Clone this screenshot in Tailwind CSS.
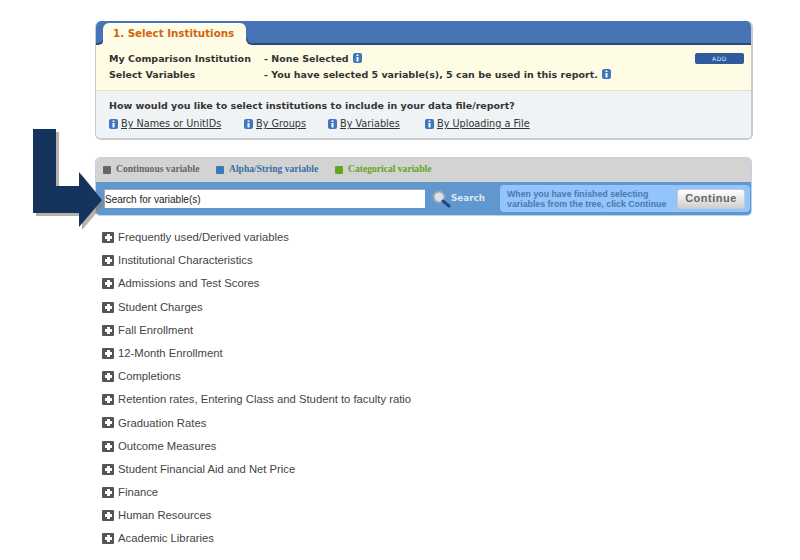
<!DOCTYPE html>
<html lang="en">
<head>
  <meta charset="UTF-8">
  <title>Select Institutions</title>
  <script src="https://cdn.jsdelivr.net/npm/@tailwindcss/browser@4"></script>
</head>
<body class="bg-white font-['DejaVu_Sans',sans-serif]">
<div class="relative h-[560px] w-[800px] overflow-hidden pl-[95px] pt-[21px]">

  <!-- Step 1 panel -->
  <section class="w-[658px] h-[119px] rounded-[6px] border-b-2 border-r-2 border-l border-[#c9cbcc] overflow-hidden flex flex-col">
    <div class="h-[24px] bg-[#4674b5] border-b-2 border-[#2b4a75] relative shrink-0">
      <div class="absolute left-[1px] bottom-[-2px] w-[7px] h-[7px] bg-[#fffde8]"><div class="w-[7px] h-[7px] bg-[#4674b5] rounded-br-[6px] border-b-2 border-r border-[#2b4a75]"></div></div>
      <div class="absolute left-[7px] top-[2px] h-[22px] w-[143px] bg-[#fffde8] rounded-t-[6px] pl-[10px] pt-[3px] text-[10.3px] font-bold text-[#d0660a] leading-[14px]">1. Select Institutions</div>
      <div class="absolute left-[150px] bottom-[-2px] w-[7px] h-[7px] bg-[#fffde8]"><div class="w-[7px] h-[7px] bg-[#4674b5] rounded-bl-[6px] border-b-2 border-l border-[#2b4a75]"></div></div>
    </div>
    <div class="h-[46px] bg-[#fffce6] border-b border-dotted border-[#cfcdb8] pl-[13px] pt-[6px] text-[9.5px] font-bold text-[#333] shrink-0 relative">
      <div class="flex h-[16px] items-center">
        <span class="w-[155px]">My Comparison Institution</span>
        <span>- None Selected</span>
        <svg class="ml-[4px] mb-[2px]" width="9" height="10" viewBox="0 0 9 10"><rect width="9" height="10" rx="2" fill="#3f76bd"/><path d="M3.5 1.5h2v1.6h-2zM3.5 4h2v4.5h-2z" fill="#fff"/></svg>
      </div>
      <div class="flex h-[16px] items-center">
        <span class="w-[155px]">Select Variables</span>
        <span>- You have selected 5 variable(s), 5 can be used in this report.</span>
        <svg class="ml-[4px] mb-[2px]" width="9" height="10" viewBox="0 0 9 10"><rect width="9" height="10" rx="2" fill="#3f76bd"/><path d="M3.5 1.5h2v1.6h-2zM3.5 4h2v4.5h-2z" fill="#fff"/></svg>
      </div>
      <button class="absolute right-[7px] top-[8px] w-[49px] h-[11px] bg-[#2f5a9b] rounded-[2px] text-[#dfe8f3] text-[6px] font-normal leading-[11px] tracking-[0.5px] text-center">ADD</button>
    </div>
    <div class="flex-1 bg-[#eff3f5] pl-[13px] pt-[7px] text-[#333]">
      <p class="text-[9.5px] font-bold leading-[16px]">How would you like to select institutions to include in your data file/report?</p>
      <div class="flex mt-[2px] text-[9.7px] leading-[16px]">
        <a class="flex items-center w-[135px]"><svg class="mr-[3px]" width="9" height="10" viewBox="0 0 9 10"><rect width="9" height="10" rx="2" fill="#3f76bd"/><path d="M3.5 1.5h2v1.6h-2zM3.5 4h2v4.5h-2z" fill="#fff"/></svg><span class="underline">By Names or UnitIDs</span></a>
        <a class="flex items-center w-[84px]"><svg class="mr-[3px]" width="9" height="10" viewBox="0 0 9 10"><rect width="9" height="10" rx="2" fill="#3f76bd"/><path d="M3.5 1.5h2v1.6h-2zM3.5 4h2v4.5h-2z" fill="#fff"/></svg><span class="underline">By Groups</span></a>
        <a class="flex items-center w-[97px]"><svg class="mr-[3px]" width="9" height="10" viewBox="0 0 9 10"><rect width="9" height="10" rx="2" fill="#3f76bd"/><path d="M3.5 1.5h2v1.6h-2zM3.5 4h2v4.5h-2z" fill="#fff"/></svg><span class="underline">By Variables</span></a>
        <a class="flex items-center"><svg class="mr-[3px]" width="9" height="10" viewBox="0 0 9 10"><rect width="9" height="10" rx="2" fill="#3f76bd"/><path d="M3.5 1.5h2v1.6h-2zM3.5 4h2v4.5h-2z" fill="#fff"/></svg><span class="underline">By Uploading a File</span></a>
      </div>
    </div>
  </section>

  <!-- Search panel -->
  <section class="mt-[17px] w-[657px] h-[59px] rounded-[5px] border border-[#bcd3ea] overflow-hidden flex flex-col">
    <div class="h-[24px] bg-[#d3d3d3] flex items-center pl-[7px] pb-[2px] font-['Liberation_Serif',serif] font-bold text-[9.6px] shrink-0">
      <span class="w-[8px] h-[8px] bg-[#666] rounded-[1px] mr-[5px] shrink-0 mt-[2px]"></span><span class="text-[#666] w-[100px]">Continuous variable</span>
      <span class="w-[8px] h-[8px] bg-[#3c78bd] rounded-[1px] mr-[5px] shrink-0 mt-[2px]"></span><span class="text-[#3a6ea8] w-[106px]">Alpha/String variable</span>
      <span class="w-[8px] h-[8px] bg-[#62a61f] rounded-[1px] mr-[5px] shrink-0 mt-[2px]"></span><span class="text-[#62a61f]">Categorical variable</span>
    </div>
    <div class="flex-1 bg-[#6197cf] flex items-center pl-[8px]">
      <input class="w-[321px] shrink-0 h-[19px] bg-white border-t border-l border-[#a9a9a9] text-[10px] text-[#222] font-['Liberation_Sans',sans-serif] placeholder:text-[#222]" placeholder="Search for variable(s)">
      <svg class="ml-[6px] shrink-0" width="20" height="20" viewBox="0 0 20 20">
        <circle cx="8" cy="8" r="5.5" fill="#d7e2ec" stroke="#9aa5ad" stroke-width="2"/>
        <path d="M12 12l6 5" stroke="#1d4a80" stroke-width="3" stroke-linecap="round"/>
      </svg>
      <span class="w-[37px] shrink-0 text-[8.8px] font-bold text-[#dbe8f5]">Search</span>
      <div class="ml-[12px] w-[250px] shrink-0 h-[27px] bg-[#93c4fb] rounded-[4px] flex items-center pl-[7px] pr-[5px] justify-between">
        <p class="font-['Liberation_Sans',sans-serif] text-[8.8px] leading-[10px] font-bold text-[#4a78ad] whitespace-nowrap">When you have finished selecting<br>variables from the tree, click Continue</p>
        <button class="w-[68px] h-[20px] shrink-0 rounded-[3px] bg-gradient-to-b from-white to-[#cfcfcf] border border-[#c4ccd6] font-['Liberation_Sans',sans-serif] text-[11px] tracking-[0.5px] font-bold text-[#666]">Continue</button>
      </div>
    </div>
  </section>

  <!-- Variable tree -->
  <ul class="mt-[9.9px] pl-[7px] font-['Liberation_Sans',sans-serif] text-[11.27px] text-[#444]">
    <li class="h-[23.2px] flex items-center"><span class="w-[12px] h-[11px] mr-[4px] bg-[#555] rounded-[1px] bg-[linear-gradient(white,white),linear-gradient(white,white)] bg-[length:7px_3px,3px_7px] bg-center bg-no-repeat"></span>Frequently used/Derived variables</li>
    <li class="h-[23.2px] flex items-center"><span class="w-[12px] h-[11px] mr-[4px] bg-[#555] rounded-[1px] bg-[linear-gradient(white,white),linear-gradient(white,white)] bg-[length:7px_3px,3px_7px] bg-center bg-no-repeat"></span>Institutional Characteristics</li>
    <li class="h-[23.2px] flex items-center"><span class="w-[12px] h-[11px] mr-[4px] bg-[#555] rounded-[1px] bg-[linear-gradient(white,white),linear-gradient(white,white)] bg-[length:7px_3px,3px_7px] bg-center bg-no-repeat"></span>Admissions and Test Scores</li>
    <li class="h-[23.2px] flex items-center"><span class="w-[12px] h-[11px] mr-[4px] bg-[#555] rounded-[1px] bg-[linear-gradient(white,white),linear-gradient(white,white)] bg-[length:7px_3px,3px_7px] bg-center bg-no-repeat"></span>Student Charges</li>
    <li class="h-[23.2px] flex items-center"><span class="w-[12px] h-[11px] mr-[4px] bg-[#555] rounded-[1px] bg-[linear-gradient(white,white),linear-gradient(white,white)] bg-[length:7px_3px,3px_7px] bg-center bg-no-repeat"></span>Fall Enrollment</li>
    <li class="h-[23.2px] flex items-center"><span class="w-[12px] h-[11px] mr-[4px] bg-[#555] rounded-[1px] bg-[linear-gradient(white,white),linear-gradient(white,white)] bg-[length:7px_3px,3px_7px] bg-center bg-no-repeat"></span>12-Month Enrollment</li>
    <li class="h-[23.2px] flex items-center"><span class="w-[12px] h-[11px] mr-[4px] bg-[#555] rounded-[1px] bg-[linear-gradient(white,white),linear-gradient(white,white)] bg-[length:7px_3px,3px_7px] bg-center bg-no-repeat"></span>Completions</li>
    <li class="h-[23.2px] flex items-center"><span class="w-[12px] h-[11px] mr-[4px] bg-[#555] rounded-[1px] bg-[linear-gradient(white,white),linear-gradient(white,white)] bg-[length:7px_3px,3px_7px] bg-center bg-no-repeat"></span>Retention rates, Entering Class and Student to faculty ratio</li>
    <li class="h-[23.2px] flex items-center"><span class="w-[12px] h-[11px] mr-[4px] bg-[#555] rounded-[1px] bg-[linear-gradient(white,white),linear-gradient(white,white)] bg-[length:7px_3px,3px_7px] bg-center bg-no-repeat"></span>Graduation Rates</li>
    <li class="h-[23.2px] flex items-center"><span class="w-[12px] h-[11px] mr-[4px] bg-[#555] rounded-[1px] bg-[linear-gradient(white,white),linear-gradient(white,white)] bg-[length:7px_3px,3px_7px] bg-center bg-no-repeat"></span>Outcome Measures</li>
    <li class="h-[23.2px] flex items-center"><span class="w-[12px] h-[11px] mr-[4px] bg-[#555] rounded-[1px] bg-[linear-gradient(white,white),linear-gradient(white,white)] bg-[length:7px_3px,3px_7px] bg-center bg-no-repeat"></span>Student Financial Aid and Net Price</li>
    <li class="h-[23.2px] flex items-center"><span class="w-[12px] h-[11px] mr-[4px] bg-[#555] rounded-[1px] bg-[linear-gradient(white,white),linear-gradient(white,white)] bg-[length:7px_3px,3px_7px] bg-center bg-no-repeat"></span>Finance</li>
    <li class="h-[23.2px] flex items-center"><span class="w-[12px] h-[11px] mr-[4px] bg-[#555] rounded-[1px] bg-[linear-gradient(white,white),linear-gradient(white,white)] bg-[length:7px_3px,3px_7px] bg-center bg-no-repeat"></span>Human Resources</li>
    <li class="h-[23.2px] flex items-center"><span class="w-[12px] h-[11px] mr-[4px] bg-[#555] rounded-[1px] bg-[linear-gradient(white,white),linear-gradient(white,white)] bg-[length:7px_3px,3px_7px] bg-center bg-no-repeat"></span>Academic Libraries</li>
  </ul>

  <!-- Annotation arrow over the search box -->
  <svg class="absolute left-0 top-0" width="120" height="240" viewBox="0 0 120 240">
    <path d="M36 132h23v57h23v-14l23 28-23 27v-14h-46z" fill="#8a7f72" fill-opacity="0.6"/>
    <path d="M33 129h23v57h23v-14l23 28-23 27v-14h-46z" fill="#14345e"/>
  </svg>
</div>
</body>
</html>
